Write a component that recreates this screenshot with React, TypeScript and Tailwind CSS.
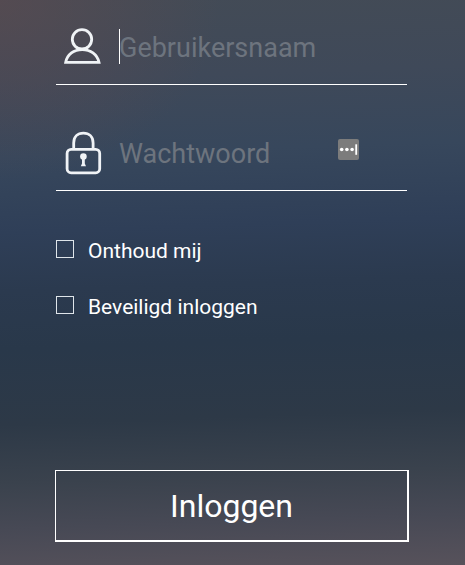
import React, { useState } from 'react';
import { clsx } from 'clsx';

interface FieldProps {
  id: string;
  type: 'text' | 'password';
  label: string;
  icon: React.ReactNode;
  active?: boolean;
  children?: React.ReactNode;
}

interface OptionProps {
  id: string;
  label: string;
}

const UserIcon = () => (
  <svg viewBox="0 0 44 44" className="size-11 shrink-0" fill="none" stroke="#f0f3f6" strokeWidth="2.8" aria-hidden="true">
    <circle cx="22" cy="14.3" r="9.7" />
    <path d="M5.7 37.3C7.2 29.2 14 24.6 22.2 24.6S37.2 29.2 39 37.3Z" />
  </svg>
);

const LockIcon = () => (
  <svg viewBox="0 0 44 44" className="size-11 shrink-0" fill="none" stroke="#f0f3f6" strokeWidth="2.8" aria-hidden="true">
    <rect x="7.1" y="18.4" width="32.6" height="23.4" rx="4" />
    <path d="M13.7 18V12C13.7 6 17.6 2.2 23.4 2.2S33.1 6 33.1 12V18" />
    <circle cx="23.4" cy="25.6" r="3.3" fill="#f0f3f6" stroke="none" />
    <path d="M22 26h2.8v6.5l1.2 2.8h-5.2l1.2-2.8z" fill="#f0f3f6" stroke="none" />
  </svg>
);

const Field: React.FC<FieldProps> = ({ id, type, label, icon, active, children }) => {
  const [value, setValue] = useState('');

  return (
    <div className="relative flex h-[70px] items-center gap-[15px] border-b border-white pb-1.5 pl-1">
      <label htmlFor={id} aria-label={label}>
        {icon}
      </label>
      <div
        className={clsx(
          "flex h-[35px] min-w-0 flex-1 items-end",
          active && !value && "shadow-[inset_1px_0_0_#ffffff]"
        )}
      >
        <input
          id={id}
          type={type}
          value={value}
          onChange={(e) => setValue(e.target.value)}
          placeholder={label}
          className="w-full min-w-0 bg-transparent text-[27px] leading-8 text-white outline-none placeholder:text-[#6d747e]"
        />
      </div>
      {children}
    </div>
  );
};

const Option: React.FC<OptionProps> = ({ id, label }) => (
  <div className="flex items-baseline gap-3.5">
    <input
      id={id}
      type="checkbox"
      className="size-[18px] shrink-0 appearance-none border border-[#dfe5ea] checked:bg-white"
    />
    <label htmlFor={id} className="text-[21px] leading-7">
      {label}
    </label>
  </div>
);

export default function App() {
  return (
    <main className="min-h-screen bg-[radial-gradient(ellipse_220px_180px_at_0%_0%,#5f4a4e99_0%,#5f4a4e00_100%),linear-gradient(178deg,#434b56_0%,#3f4959_14%,#37475c_27%,#2f3f58_40%,#2b3a4f_50%,#29384a_60%,#2d3947_73%,#3a424d_83%,#474955_91%,#57525b_100%)] pt-[15px] pr-14 pb-6 pl-[55px] font-['Roboto',sans-serif] text-white">
      <form onSubmit={(e) => e.preventDefault()}>
        <div className="mr-0.5 ml-px">
          <div className="flex flex-col gap-9">
            <Field id="username" type="text" label="Gebruikersnaam" icon={<UserIcon />} active />
            <Field id="password" type="password" label="Wachtwoord" icon={<LockIcon />}>
              <button
                type="button"
                aria-label="Wachtwoord invullen"
                className="absolute top-[18px] right-12 size-[21px] rounded-xs bg-[#7c7c7c]"
              >
                <svg viewBox="0 0 21 21" fill="#ffffff" aria-hidden="true">
                  <circle cx="3.7" cy="10.5" r="1.8" />
                  <circle cx="8.9" cy="10.5" r="1.8" />
                  <circle cx="14.1" cy="10.5" r="1.8" />
                  <rect x="17.3" y="5.3" width="1.8" height="10.5" />
                </svg>
              </button>
            </Field>
          </div>

          <div className="mt-[46px] flex flex-col gap-7">
            <Option id="remember" label="Onthoud mij" />
            <Option id="secure" label="Beveiligd inloggen" />
          </div>
        </div>

        <button
          type="submit"
          className="mt-[149px] h-[72px] w-full border-t border-r-2 border-b-2 border-l border-white text-[32px] leading-10"
        >
          Inloggen
        </button>
      </form>
    </main>
  );
}
